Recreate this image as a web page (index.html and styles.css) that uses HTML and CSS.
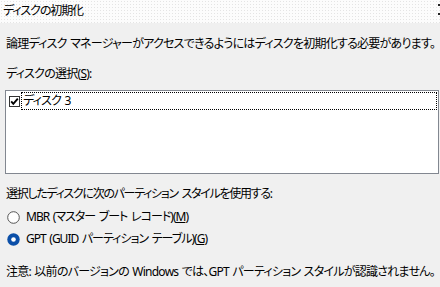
FILE: index.html
```html
<!DOCTYPE html>
<html lang="ja">
<head>
<meta charset="utf-8">
<link rel="stylesheet" href="styles.css">
</head>
<body>
<div class="window">
  <div class="titlebar">
    <span class="title">ディスクの初期化</span>
    <span class="closemark"></span>
  </div>
  <div class="content">
    <p class="line desc">論理ディスク マネージャーがアクセスできるようにはディスクを初期化する必要があります。</p>
    <p class="line label">ディスクの選択(<u>S</u>):</p>
    <div class="listbox">
      <div class="item">
        <span class="check">
          <svg width="11" height="11" viewBox="0 0 11 11"><rect x="0.5" y="0.5" width="10" height="10" fill="#fff" stroke="#333"/><path d="M2.2 5.4 L4.3 7.8 L8.8 2.6" fill="none" stroke="#000" stroke-width="1.9"/></svg>
        </span>
        <span class="itemtext">ディスク 3</span>
      </div>
    </div>
    <p class="line label2 tight">選択したディスクに次のパーティション スタイルを使用する:</p>
    <div class="line radio r1">
      <svg class="rb" width="13" height="13" viewBox="0 0 13 13"><circle cx="6.5" cy="6.5" r="5.8" fill="#fff" stroke="#555" stroke-width="1"/></svg>
      <span>MBR (マスター ブート レコード)(<u>M</u>)</span>
    </div>
    <div class="line radio r2">
      <svg class="rb" width="13" height="13" viewBox="0 0 13 13"><circle cx="6.5" cy="6.5" r="6.2" fill="#0b4fa8"/><circle cx="6.5" cy="6.5" r="2.3" fill="#fff"/></svg>
      <span>GPT (GUID パーティション テーブル)(<u>G</u>)</span>
    </div>
    <p class="line note">注意: 以前のバージョンの Windows では、GPT パーティション スタイルが認識されません。</p>
  </div>
</div>
</body>
</html>
```
FILE: styles.css
```css
html, body {
  margin: 0;
  padding: 0;
}
body {
  width: 440px;
  height: 287px;
  overflow: hidden;
  background: #f0f0f0;
  font-family: "Noto Sans", "Noto Sans CJK JP", sans-serif;
  font-size: 12px;
  letter-spacing: -0.75px;
  word-spacing: 1px;
  color: #000;
  font-feature-settings: "palt";
}
.window {
  display: flex;
  flex-direction: column;
  height: 287px;
}
.titlebar {
  height: 23px;
  display: flex;
  align-items: center;
  justify-content: space-between;
  padding-left: 3px;
  background-color: #fcfcfc;
  background-image: radial-gradient(circle, #e4e4e4 0.7px, transparent 0.9px);
  background-size: 3px 3px;
  position: relative;
}
.title {
  line-height: 16px;
  margin-top: -2px;
  letter-spacing: -1.1px;
}
.closemark {
  position: absolute;
  right: 0;
  top: 4px;
  width: 2px;
  height: 11px;
  border-top: 2px solid #222;
  border-bottom: 2px solid #222;
  box-sizing: border-box;
}
.content {
  padding: 0 6px 0 6px;
}
.line {
  margin: 0;
  line-height: 16px;
  height: 16px;
  white-space: nowrap;
}
.tight { letter-spacing: -1.3px; word-spacing: 2px; }
.desc { margin-top: 13px; }
.label { margin-top: 14px; }
.listbox {
  margin-top: 8px;
  margin-left: -1px;
  margin-right: -5px;
  height: 81px;
  background: #fff;
  border: 1px solid #828790;
  padding: 1px 1px 0 1px;
}
.item {
  display: flex;
  align-items: center;
  height: 18px;
}
.check {
  width: 13px;
  height: 18px;
  display: flex;
  align-items: center;
  justify-content: flex-end;
  margin-right: 1px;
  margin-top: 1px;
}
.itemtext {
  flex: 1;
  height: 16px;
  line-height: 15px;
  border: 1px dotted #000;
  padding-left: 1px;
}
.label2 { margin-top: 12px; }
.radio {
  display: flex;
  align-items: center;
  gap: 6px;
  letter-spacing: -1px;
  word-spacing: 1.5px;
}
.rb { margin-left: 1px; flex: none; }
.r1 { margin-top: 7px; }
.r2 { margin-top: 6px; }
.note { margin-top: 17px; }
```
